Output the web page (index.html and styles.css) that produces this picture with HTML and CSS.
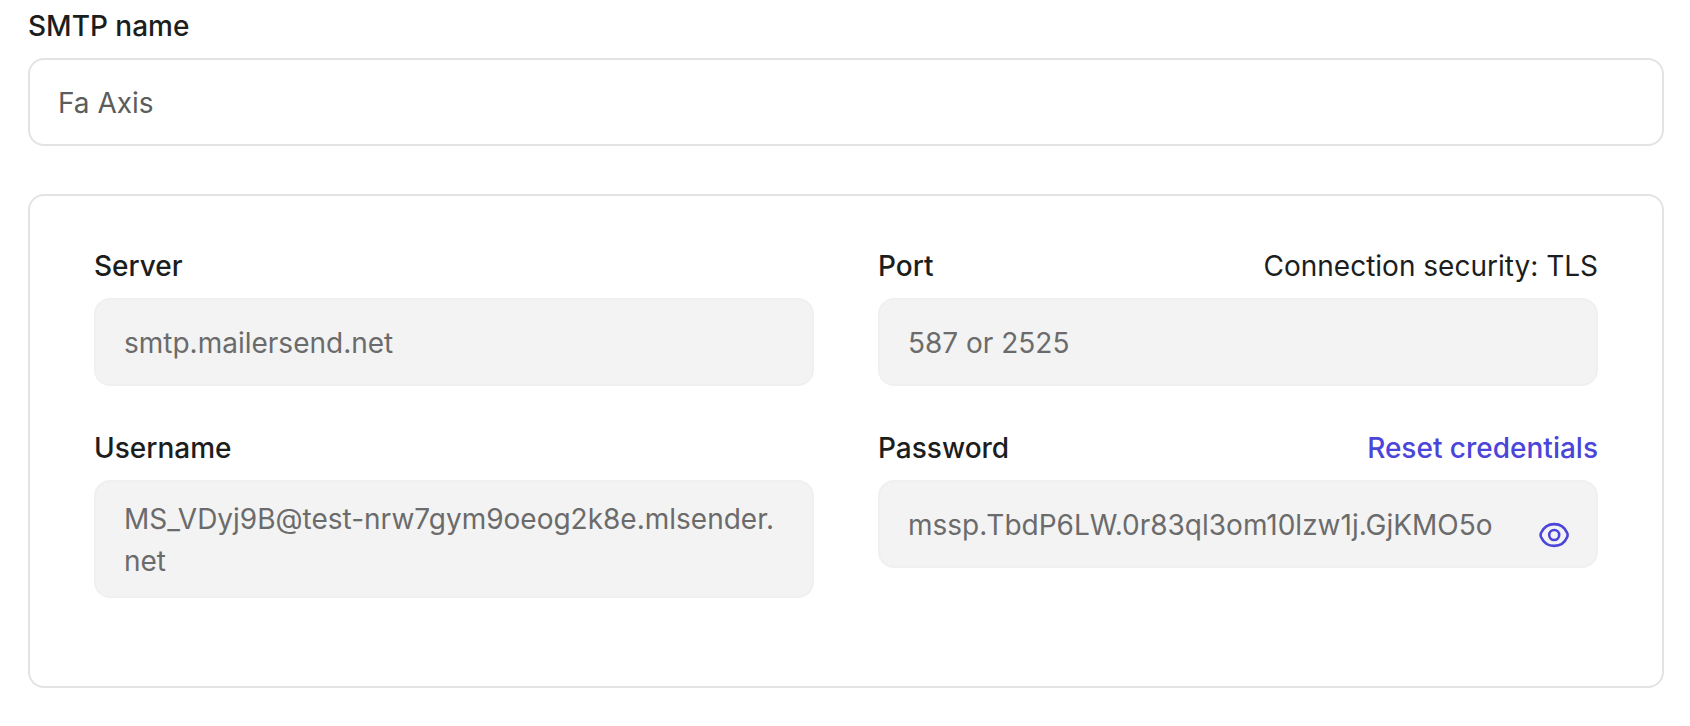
FILE: index.html
```html
<!DOCTYPE html>
<html lang="en">
<head>
<meta charset="utf-8">
<title>SMTP user</title>
<link rel="stylesheet" href="styles.css">
</head>
<body>
<main class="page">
  <div class="label name-label">SMTP name</div>
  <div class="field name-field">Fa Axis</div>
  <section class="card">
    <div class="item">
      <div class="head"><span class="label">Server</span></div>
      <div class="field readonly">smtp.mailersend.net</div>
    </div>
    <div class="item">
      <div class="head"><span class="label">Port</span><span class="note">Connection security: TLS</span></div>
      <div class="field readonly">587 or 2525</div>
    </div>
    <div class="item">
      <div class="head"><span class="label">Username</span></div>
      <div class="field readonly tall"><span>MS_VDyj9B@test-nrw7gym9oeog2k8e.mlsender.<br>net</span></div>
    </div>
    <div class="item">
      <div class="head"><span class="label">Password</span><a class="reset">Reset credentials</a></div>
      <div class="field readonly secret"><span>mssp.TbdP6LW.0r83ql3om10lzw1j.GjKMO5o</span>
        <svg class="eye" viewBox="0 0 30 26" width="30" height="26"><path d="M2 11C4.500 5.500 9.500 2.100 15.200 2.100S25.900 5.500 28.200 11Q29 13 28.200 15C25.900 20.500 20.900 23.900 15.200 23.900S4.500 20.500 2 15Q1.200 13 2 11Z"/><circle cx="15.200" cy="13" r="5"/></svg>
      </div>
    </div>
  </section>
</main>
</body>
</html>
```
FILE: styles.css
```css
* { box-sizing: border-box; }
body { margin: 0; background: #fff; color: #1c1d1d; font: 28px/42px Inter, "Liberation Sans", sans-serif; }
.page { padding: 5px 26px 0 28px; }
.label { font-weight: 500; }
.name-label { height: 53px; }
.field { height: 88px; padding: 2px 28px 0; border: 2px solid #e3e3e3; border-radius: 16px; color: #5c5c5c; display: flex; align-items: center; white-space: nowrap; }
.card { margin-top: 48px; height: 494px; border: 2px solid #e3e3e3; border-radius: 16px; padding: 49px 64px 0; display: grid; grid-template-columns: 1fr 1fr; column-gap: 64px; grid-template-rows: 182px auto; }
.head { display: flex; justify-content: space-between; height: 53px; }
.readonly { background: #f3f3f3; border-color: #f0f0f0; color: #6b6b6b; }
.tall { height: 118px; }
.secret { justify-content: space-between; }
.reset { color: #4b45d9; font-weight: 500; }
.eye { margin-top: 20px; margin-right: -1px; fill: none; stroke: #4b45d9; stroke-width: 2.600; }
```
